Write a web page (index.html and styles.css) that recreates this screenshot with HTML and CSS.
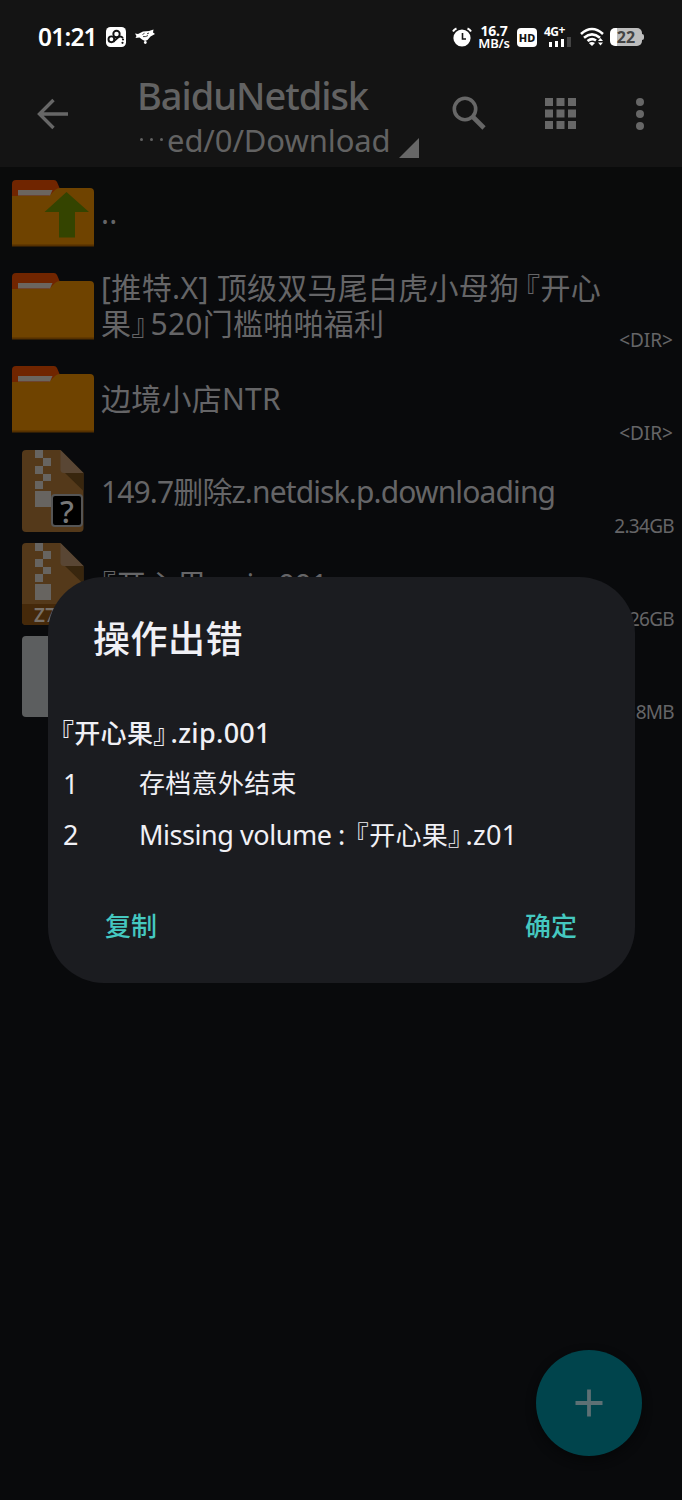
FILE: index.html
```html
<!DOCTYPE html>
<html lang="zh-CN">
<head>
<meta charset="utf-8">
<title>BaiduNetdisk</title>
<link rel="stylesheet" href="styles.css">
</head>
<body>
<svg width="0" height="0" class="defs" aria-hidden="true">
  <symbol id="folder" viewBox="0 0 82 67">
    <path d="M0 16V4Q0 0 4 0H42Q44 0 45 2L48 9V16Z" fill="#702500"/>
    <path d="M0 66V16H37L43 10Q45 8 48 8H78Q82 8 82 12V66Z" fill="#6f4300"/>
    <path d="M6 10H40.500L38 15.500H6Z" fill="#6b655f"/>
    <path d="M0 64.500H82V66.500H0Z" fill="#553000"/>
  </symbol>
  <symbol id="archive" viewBox="0 0 62 82">
    <path d="M4 0H38.500L61.500 23V78Q61.500 82 57.500 82H4Q0 82 0 78V4Q0 0 4 0Z" fill="currentColor"/>
    <path d="M43 23H61.500V41Z" fill="#38260e"/>
    <path d="M38.500 0L61.500 23H42Q38.500 23 38.500 19.500Z" fill="#594634"/>
    <path d="M13 0h8v8h-8zM21 8h8v8h-8zM13 16h8v8h-8zM21 24h8v7h-8zM13 31h8v8h-8zM13 41h16v16H13z" fill="#676460"/>
  </symbol>
</svg>
<div class="screen">
  <header class="top">
    <div class="status">
      <span class="clock">01:21</span>
      <svg class="st-disk" viewBox="0 0 20 20" width="20" height="20"><rect width="20" height="20" rx="4.500" fill="#fff"/><g fill="none" stroke="#141414" stroke-width="1.900"><circle cx="10.500" cy="7" r="3.200"/><circle cx="5.400" cy="12.300" r="2.900"/><path d="M7.500 14.500L12 10.500Q14.500 8.500 17 11"/></g><circle cx="17" cy="12.500" r="1.100" fill="#141414"/><circle cx="16.500" cy="15.800" r="1.100" fill="#141414"/></svg>
      <svg class="st-bird" viewBox="0 0 20 16" width="20" height="16"><path d="M0 4.500L3 5L8 2.500L14 2L18.500 0.500L18 3.500L20 5L15.500 7.500L12.500 11L10 12L7 10.500L4.500 8.500L0.500 9L1.500 7Z" fill="#fff"/><path d="M7.500 5.500L9.500 4.300M12 4.800L14 4M8 7.600Q11 8 13 6.500" stroke="#141414" stroke-width="0.800" fill="none"/><circle cx="10.300" cy="13.500" r="1.400" fill="#fff"/></svg>
      <div class="status-right">
        <svg class="st-alarm" viewBox="0 0 20 20" width="20" height="20"><circle cx="10" cy="11" r="8.600" fill="#fff"/><path d="M1 4.500Q2 2.500 4.500 1.500M19 4.500Q18 2.500 15.500 1.500" stroke="#fff" stroke-width="2" fill="none"/><path d="M10.500 6V12H14" stroke="#141414" stroke-width="1.600" fill="none"/></svg>
        <div class="speed"><span class="rate">16.7</span><span>MB/s</span></div>
        <span class="hd">HD</span>
        <div class="cell"><span>4G<sup>+</sup></span><svg viewBox="0 0 23 10" width="23" height="10"><path d="M1 5h3v5H1zM7 4h3v6H7zM13 2h3v8h-3z" fill="#fff"/><path d="M19 0h4v10h-4z" fill="#444"/></svg></div>
        <svg class="st-wifi" viewBox="0 0 24 20" width="24" height="20"><g fill="none" stroke="#fff" stroke-width="2.600"><path d="M1 7Q12 -3 23 7"/><path d="M4 10.700Q12 4 20 10.700"/><path d="M7.500 14Q12 10.500 16 13.500"/></g><path d="M8.800 16Q12 14 15 16L12 19Z" fill="#fff"/><path d="M18 14l2.500-3 2.500 3zM18 15.500l2.500 3 2.500-3z" fill="#fff"/></svg>
        <div class="battery"><span>22</span></div><i class="cap"></i>
      </div>
    </div>
    <div class="bar">
      <svg class="back" viewBox="0 0 32 32" width="32" height="32"><path d="M31 16H3M16.500 2L2.500 16L16.500 30" fill="none" stroke="#676767" stroke-width="3.400"/></svg>
      <div class="heading">
        <div class="title">BaiduNetdisk</div>
        <div class="path"><span class="dots"><i></i><i></i><i></i></span><span class="path-text">ed/0/Download</span><svg viewBox="0 0 20 20" width="20" height="20"><path d="M20 0V20H0Z" fill="#676767"/></svg></div>
      </div>
      <svg class="search" viewBox="0 0 34 34" width="34" height="34"><circle cx="13" cy="13" r="10.700" fill="none" stroke="#676767" stroke-width="3.600"/><path d="M20.500 20.500L32 32" stroke="#676767" stroke-width="4.600"/></svg>
      <svg class="grid" viewBox="0 0 31 31" width="31" height="31"><path d="M0 0h8v8H0zM11.500 0h8v8h-8zM23 0h8v8h-8zM0 11.500h8v8H0zM11.500 11.500h8v8h-8zM23 11.500h8v8h-8zM0 23h8v8H0zM11.500 23h8v8h-8zM23 23h8v8h-8z" fill="#676767"/></svg>
      <svg class="more" viewBox="0 0 8 32" width="8" height="32"><g fill="#676767"><circle cx="4" cy="4" r="4"/><circle cx="4" cy="16" r="4"/><circle cx="4" cy="28" r="4"/></g></svg>
    </div>
  </header>
  <main class="list">
    <div class="row parent">
      <div class="ico"><svg width="82" height="67" viewBox="0 0 82 67"><use href="#folder"/><path d="M54.500 12L77 32H63V57.500H47V32H32.500Z" fill="#344400"/></svg></div>
      <div class="name">..</div>
    </div>
    <div class="row">
      <div class="ico"><svg width="82" height="67"><use href="#folder"/></svg></div>
      <div class="name"><span class="lead">[推特.X]</span> 顶级双马尾白虎小母狗<b class="ob wide">『</b>开心<br>果<b class="cb">』</b>520门槛啪啪福利</div>
      <div class="size">&lt;DIR&gt;</div>
    </div>
    <div class="row">
      <div class="ico"><svg width="82" height="67"><use href="#folder"/></svg></div>
      <div class="name">边境小店NTR</div>
      <div class="size">&lt;DIR&gt;</div>
    </div>
    <div class="row">
      <div class="ico file dim"><svg width="62" height="82"><use href="#archive"/></svg><span class="unknown">?</span></div>
      <div class="name long">149.7删除z.netdisk.p.downloading</div>
      <div class="size tight">2.34GB</div>
    </div>
    <div class="row">
      <div class="ico file"><svg width="62" height="82"><use href="#archive"/><path d="M0 61H61.500V78Q61.500 82 57.500 82H4Q0 82 0 78Z" fill="#45290a"/></svg><span class="kind">Z7</span></div>
      <div class="name"><b class="ob">『</b>开心果<b class="cb">』</b><span class="ext">.zip.001</span></div>
      <div class="size tight">26GB</div>
    </div>
    <div class="row">
      <div class="ico file"><div class="blank"></div></div>
      <div class="name"></div>
      <div class="size tight">8MB</div>
    </div>
  </main>
  <div class="fab"><svg viewBox="0 0 28 28" width="28" height="28"><path d="M14 0.500V27.500M0.500 14H27.500" stroke="#5d7074" stroke-width="3.800"/></svg></div>
  <section class="dialog">
    <h1>操作出错</h1>
    <div class="archive-name"><b class="ob">『</b>开心果<b class="cb">』</b><span class="latin">.zip.001</span></div>
    <div class="msg"><span class="num">1</span><p>存档意外结束</p></div>
    <div class="msg"><span class="num">2</span><p><span class="missing">Missing volume :</span><b class="ob gap">『</b>开心果<b class="cb">』</b><span class="latin">.z01</span></p></div>
    <div class="actions"><span>复制</span><span>确定</span></div>
  </section>
</div>
</body>
</html>
```
FILE: styles.css
```css
* { box-sizing: border-box; }
body { margin: 0; background: #090a0c; font-family: "Noto Sans", "Noto Sans CJK SC", sans-serif; }
svg { display: block; flex: none; }
.defs { position: absolute; }
.screen { position: relative; width: 682px; height: 1500px; overflow: hidden; background: #090a0c; color: #656567; }
.top { height: 167px; background: #141414; }
.status { display: flex; align-items: center; height: 74px; padding: 0 38px; color: #fff; }
.clock { width: 59px; font-size: 24.5px; font-weight: 600; line-height: 30px; letter-spacing: -0.8px; white-space: nowrap; }
.st-disk { margin-left: 9px; }
.st-bird { margin-left: 9px; }
.status-right { display: flex; align-items: center; margin-left: auto; }
.speed { display: flex; flex-direction: column; align-items: center; width: 32px; margin-left: 6px; font-size: 13px; font-weight: 600; line-height: 12px; letter-spacing: -0.2px; }
.rate { font-size: 14px; font-weight: 700; }
.hd { width: 20px; height: 19px; margin-left: 7px; border-radius: 4px; background: #fff; color: #141414; font-size: 11px; font-weight: 800; line-height: 19px; text-align: center; }
.cell { width: 28px; margin-left: 7px; font-size: 12px; font-weight: 700; line-height: 10px; letter-spacing: -0.5px; }
.cell sup { font-size: 12px; line-height: 0; vertical-align: 2px; }
.cell svg { margin-left: 4px; }
.st-wifi { margin-left: 8px; }
.battery { width: 32px; height: 18px; margin: 0 0 0 6px; border-radius: 5px; background: linear-gradient(90deg, #fff 7px, #bdbdbd 7px); color: #444; font-size: 16px; font-weight: 700; line-height: 18px; text-align: center; }
.cap { width: 2px; height: 6px; border-radius: 0 2px 2px 0; background: #bdbdbd; }
.bar { display: flex; height: 93px; padding-left: 37px; }
.back { margin-top: 24px; }
.heading { width: 383px; padding-left: 68px; color: #626262; }
.title { height: 42px; font-size: 38px; font-weight: 500; line-height: 43px; letter-spacing: -1.05px; white-space: nowrap; }
.path { display: flex; height: 48px; font-size: 31px; line-height: 49px; white-space: nowrap; }
.path-text { letter-spacing: -0.1px; }
.dots { display: flex; gap: 7px; padding: 22px 4px 0 3px; }
.dots i { width: 3px; height: 3px; border-radius: 50%; background: #626262; }
.path svg { margin: 22px 0 0 8px; }
.search { margin: 22px 0 0; }
.grid { margin: 24px 0 0 59px; }
.more { margin: 24px 0 0 60px; }
.row { display: flex; position: relative; height: 93px; padding-left: 12px; }
.parent { background: #0a0b0b; }
.ico { width: 82px; padding-top: 12.5px; }
.file { position: relative; padding: 4px 10px 0; color: #54391a; }
.name { flex: 1; align-self: center; padding: 0 0 1px 7px; font-size: 30px; line-height: 36px; letter-spacing: 0.25px; white-space: nowrap; }
.lead { letter-spacing: 0.4px; }
.long { letter-spacing: -0.87px; }
.ext { letter-spacing: -0.9px; }
.size { align-self: flex-end; padding-right: 9px; font-size: 19px; line-height: 26px; }
.tight { padding-right: 8px; letter-spacing: -0.7px; }
b { font-weight: inherit; font-feature-settings: "halt"; }
.wide { margin-left: 6px; }
.cb { margin-right: 4px; }
.unknown { position: absolute; left: 39px; top: 48px; width: 32px; height: 33px; border: 2px solid #555; border-radius: 4px; background: #000; color: #777; font-size: 31px; font-weight: 500; line-height: 30px; text-align: center; }
.kind { position: absolute; left: 22px; top: 66px; color: #777069; font-size: 19px; font-weight: 600; line-height: 20px; }
.blank { width: 62px; height: 81px; border-radius: 4px; background: #5c5e5f; }
.fab { position: absolute; left: 536px; top: 1350px; display: grid; place-items: center; width: 106px; height: 106px; border-radius: 50%; background: #00444c; box-shadow: 0 4px 10px #060708; }
.dialog { position: absolute; left: 48px; top: 577px; width: 587px; height: 406px; padding: 36px 15px 0; border-radius: 56px; background: #1b1c20; color: #f0f0f5; }
h1 { margin: 0 0 68px 30px; font-size: 37px; font-weight: 500; line-height: 52px; letter-spacing: 0.5px; }
.archive-name { height: 51px; font-size: 26px; font-weight: 500; line-height: 51px; margin-top: -26px; letter-spacing: 0.3px; }
.archive-name .ob { margin-left: -2px; }
.latin { font-size: 27px; }
.gap { margin-left: 11px; }
.msg { display: flex; height: 51px; font-size: 26px; line-height: 51px; letter-spacing: 0.3px; }
.num { width: 76px; font-size: 27px; }
.missing { font-size: 27px; letter-spacing: -0.45px; }
.msg p { margin: 0; white-space: nowrap; }
.actions { display: flex; justify-content: space-between; padding: 46px 43px 0 42px; color: #45c8c0; font-size: 26px; font-weight: 500; line-height: 40px; }
```
